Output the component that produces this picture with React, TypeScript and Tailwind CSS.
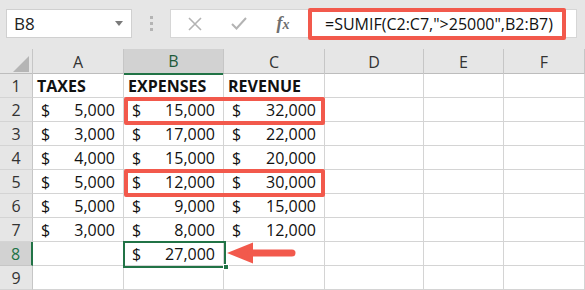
import React from "react";

const cols = ["A", "B", "C", "D", "E", "F"];

type Row = { n: number; cells: (string | [string] | null)[] };

// [x] means bold label, plain strings are currency amounts
const rows: Row[] = [
  { n: 1, cells: [["TAXES"], ["EXPENSES"], ["REVENUE"], null, null, null] },
  { n: 2, cells: ["5,000", "15,000", "32,000", null, null, null] },
  { n: 3, cells: ["3,000", "17,000", "22,000", null, null, null] },
  { n: 4, cells: ["4,000", "15,000", "20,000", null, null, null] },
  { n: 5, cells: ["5,000", "12,000", "30,000", null, null, null] },
  { n: 6, cells: ["5,000", "9,000", "15,000", null, null, null] },
  { n: 7, cells: ["3,000", "8,000", "12,000", null, null, null] },
  { n: 8, cells: [null, "27,000", null, null, null, null] },
  { n: 9, cells: [null, null, null, null, null, null] },
];

const gridCols = "grid grid-cols-[33px_91px_100px_101px_99px_80px_81px]";

function Cell({ v }: { v: string | [string] | null }) {
  if (v === null) return <div className="h-6 border-r border-b border-[#d4d4d4]" />;
  if (Array.isArray(v))
    return (
      <div className="h-6 border-r border-b border-[#d4d4d4] flex items-center pl-[4px] font-bold text-[16px] text-[#111]">
        {v[0]}
      </div>
    );
  return (
    <div className="h-6 border-r border-b border-[#d4d4d4] flex items-center justify-between pl-[8px] pr-[8px] text-[16px] text-[#111]">
      <span>$</span>
      <span>{v}</span>
    </div>
  );
}

function FormulaBar() {
  return (
    <div className="h-[49px] bg-[#e6e6e6] flex items-start pt-[9px]">
      <div className="ml-[6px] w-[126px] h-[29px] bg-white border border-[#d0d0d0] flex items-center justify-between pl-[7px] pr-[8px]">
        <span className="text-[17px] text-[#222]">B8</span>
        <svg width="8" height="5" viewBox="0 0 8 5">
          <path d="M0 0h8L4 5z" fill="#7a7a7a" />
        </svg>
      </div>
      <div className="w-[38px] h-[29px] flex flex-col items-center justify-center gap-[3px]">
        <span className="w-[3px] h-[3px] bg-[#b4b4b4]" />
        <span className="w-[3px] h-[3px] bg-[#b4b4b4]" />
        <span className="w-[3px] h-[3px] bg-[#b4b4b4]" />
      </div>
      <div className="w-[407px] h-[29px] bg-white border border-[#d6d6d6] flex items-center">
        <div className="w-[44px] flex justify-center ml-[2px]">
          <svg width="14" height="14" viewBox="0 0 14 14">
            <path d="M1 1L13 13M13 1L1 13" stroke="#b3b3b3" strokeWidth="1.6" />
          </svg>
        </div>
        <div className="w-[44px] flex justify-center">
          <svg width="16" height="13" viewBox="0 0 16 13">
            <path d="M1 7l4.5 4.5L15 1" stroke="#b3b3b3" strokeWidth="2" fill="none" />
          </svg>
        </div>
        <div className="w-[44px] flex justify-center">
          <span className="italic text-[18px] text-[#6f6f6f] [font-family:'Liberation_Serif',serif] font-semibold">
            f<span className="text-[14px]">x</span>
          </span>
        </div>
        <div className="ml-[3px] -my-[1px] w-[258px] h-[32px] border-[4px] border-[#f2594c] rounded-[2px] flex items-center pl-[13px] text-[16px] text-[#111]">
          =SUMIF(C2:C7,"&gt;25000",B2:B7)
        </div>
      </div>
    </div>
  );
}

export default function App() {
  return (
    <div className="w-[585px] h-[290px] overflow-hidden bg-white relative [font-family:'Open_Sans',sans-serif]">
      <FormulaBar />
      <div className={gridCols + " h-[25px] bg-[#e6e6e6] border-b border-[#bdbdbd]"}>
        <div className="border-r border-[#c6c6c6] flex items-end justify-end pr-[3px] pb-[3px]">
          <svg width="16" height="16" viewBox="0 0 16 16">
            <path d="M16 0V16H0z" fill="#b5b5b5" />
          </svg>
        </div>
        {cols.map((c) =>
          c === "B" ? (
            <div
              key={c}
              className="bg-[#d2d2d2] border-r border-[#c6c6c6] border-b-2 border-b-[#217346] flex items-center justify-center text-[16px] text-[#1e5a3a]"
            >
              {c}
            </div>
          ) : (
            <div key={c} className="border-r border-[#c6c6c6] flex items-center justify-center text-[16px] text-[#333]">
              {c}
            </div>
          )
        )}
      </div>
      {rows.map((r) => (
        <div key={r.n} className={gridCols}>
          {r.n === 8 ? (
            <div className="h-6 bg-[#d2d2d2] border-r-2 border-r-[#217346] border-b border-[#c6c6c6] flex items-center justify-center text-[16px] text-[#217346]">
              {r.n}
            </div>
          ) : (
            <div className="h-6 bg-[#e6e6e6] border-r border-[#c6c6c6] border-b border-b-[#d4d4d4] flex items-center justify-center text-[16px] text-[#333]">
              {r.n}
            </div>
          )}
          {r.cells.map((v, i) => (
            <Cell key={i} v={v} />
          ))}
        </div>
      ))}

      {/* highlight boxes */}
      <div className="absolute left-[124px] top-[97px] w-[201px] h-[28px] border-[4px] border-[#f2594c] rounded-[2px]" />
      <div className="absolute left-[124px] top-[169px] w-[201px] h-[28px] border-[4px] border-[#f2594c] rounded-[2px]" />

      {/* selected cell */}
      <div className="absolute left-[123px] top-[241px] w-[103px] h-[27px] border-2 border-[#217346]" />
      <div className="absolute left-[223px] top-[264px] w-[6px] h-[6px] bg-[#217346] border border-white" />

      {/* arrow */}
      <svg className="absolute left-[226px] top-[241px]" width="72" height="24" viewBox="0 0 72 24">
        <path d="M1 12L27 1.5V22.5z" fill="#f2594c" />
        <path d="M25 12H66" stroke="#f2594c" strokeWidth="7" strokeLinecap="round" />
      </svg>
    </div>
  );
}
